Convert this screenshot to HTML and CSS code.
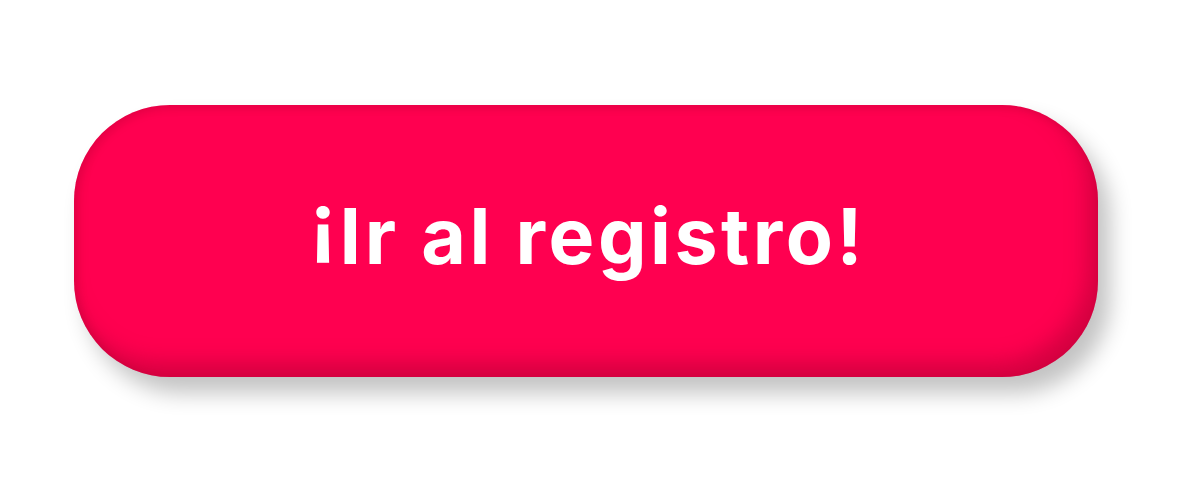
FILE: index.html
```html
<!DOCTYPE html>
<html lang="es">
<head>
<meta charset="utf-8">
<title>Registro</title>
<link rel="stylesheet" href="styles.css">
</head>
<body>
<main class="stage">
  <a class="cta" href="#"><span class="label"><span class="inv">¡</span>Ir al registro!</span></a>
</main>
</body>
</html>
```
FILE: styles.css
```css
html, body {
  margin: 0;
  padding: 0;
  background: #ffffff;
}
.stage {
  width: 1181px;
  height: 501px;
  box-sizing: border-box;
  padding: 105px 0 0 74px;
  display: flex;
  align-items: flex-start;
}
.cta {
  width: 1024px;
  height: 272px;
  border-radius: 96px;
  background: #ff0050;
  display: flex;
  align-items: center;
  justify-content: center;
  color: #ffffff;
  text-decoration: none;
  font-family: Inter, "Noto Sans", sans-serif;
  font-weight: 700;
  font-size: 77px;
  letter-spacing: 3.5px;
  padding: 0 0 10px 4px;
  box-sizing: border-box;
  box-shadow:
    inset -10px -14px 22px rgba(130, 0, 35, 0.35),
    inset 4px 3px 8px rgba(130, 0, 35, 0.18),
    12px 16px 22px rgba(0, 0, 0, 0.24);
}
.label {
  display: block;
  line-height: 1.2;
}
.inv {
  line-height: 0;
  vertical-align: 0.19em;
}
```
